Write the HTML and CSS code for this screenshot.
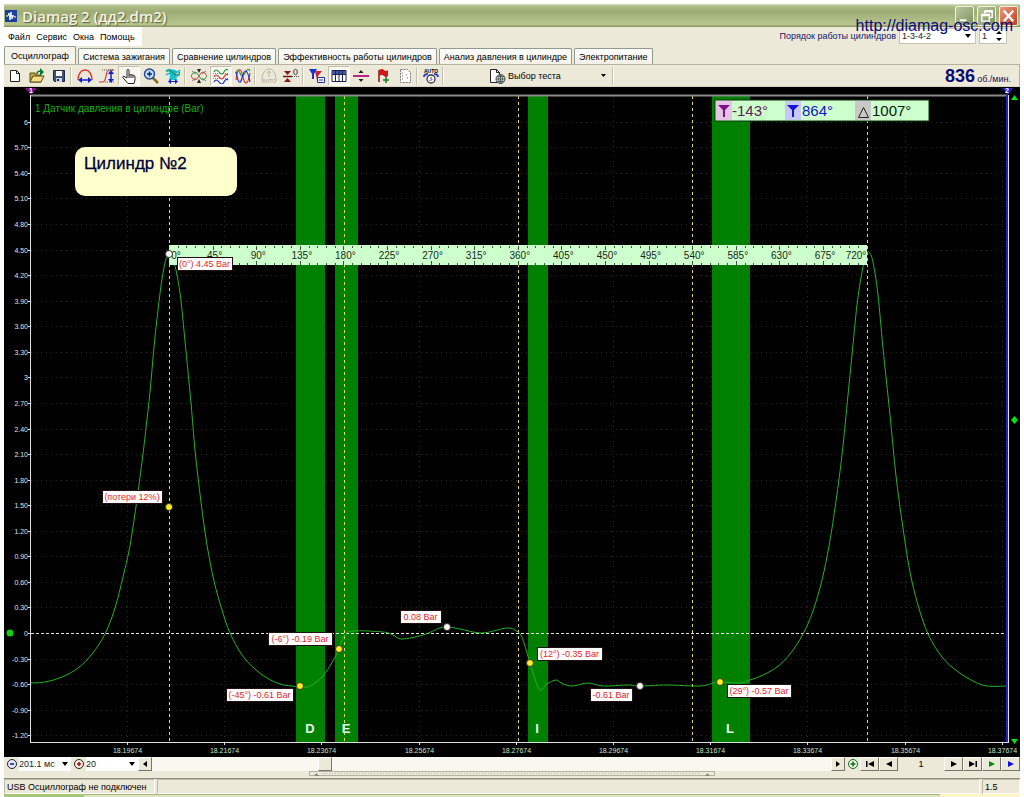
FILE: index.html
```html
<!DOCTYPE html>
<html lang="ru">
<head>
<meta charset="utf-8">
<title>Diamag 2 (дд2.dm2)</title>
<link rel="stylesheet" href="styles.css">
</head>
<body>
<div class="window">
  <a class="site-link" href="#site">http://diamag-osc.com</a>
  <header class="titlebar">
    <svg class="app-icon" viewBox="0 0 12 12" aria-hidden="true"><rect width="12" height="12" fill="#1a3f9c"/><path d="M1 6h2l1-3 1 7 1-8 1 7 1-4 1 2h2" fill="none" stroke="#fff"/></svg>
    <h1 class="title">Diamag 2 (дд2.dm2)</h1>
    <div class="caption-buttons">
      <button class="caption" aria-label="Свернуть"><svg viewBox="0 0 18 19"><path d="M4 14h7" stroke="#fff" stroke-width="2"/></svg></button>
      <button class="caption" aria-label="Восстановить"><svg viewBox="0 0 18 19"><path d="M7 4h8v7h-3M7 4v3M7 5h8M4 8h8v7H4zM4 9h8" fill="none" stroke="#fff" stroke-width="1.5"/></svg></button>
      <button class="caption close" aria-label="Закрыть"><svg viewBox="0 0 18 19"><path d="M4 4l10 11M14 4L4 15" stroke="#fff" stroke-width="2.4"/></svg></button>
    </div>
  </header>

  <div class="menu-row">
    <nav class="menu">
      <button>Файл</button><button>Сервис</button><button>Окна</button><button>Помощь</button>
    </nav>
    <div class="order">
      <label for="order">Порядок работы цилиндров</label>
      <span class="combo order-combo"><select id="order"><option>1-3-4-2</option></select><svg class="drop" viewBox="0 0 6 4"><path d="M0 0h6L3 4z"/></svg></span>
      <span class="combo spin-combo"><input id="cyl" aria-label="Цилиндр" value="1"><svg class="spin" viewBox="0 0 6 12"><path d="M0 4h6L3 1zM0 8h6l-3 3z"/></svg></span>
    </div>
  </div>

  <div class="tabs" role="tablist">
    <button role="tab" aria-selected="true" class="tab active">Осциллограф</button>
    <button role="tab" class="tab">Система зажигания</button>
    <button role="tab" class="tab">Сравнение цилиндров</button>
    <button role="tab" class="tab">Эффективность работы цилиндров</button>
    <button role="tab" class="tab">Анализ давления в цилиндре</button>
    <button role="tab" class="tab">Электропитание</button>
  </div>

  <div class="toolbar">
    <button class="tool" aria-label="Новый"><svg viewBox="0 0 16 16"><path d="M3.500 2.500h6l3 3v8h-9z" fill="#fff" stroke="#222"/><path d="M9.500 2.500v3h3" fill="none" stroke="#222"/></svg></button>
    <button class="tool" aria-label="Открыть"><svg viewBox="0 0 16 16"><path d="M1 14V5h5l1 2h5v7z" fill="#c9a94a" stroke="#5b4a10"/><path d="M1 14l3-6h11l-3 6z" fill="#f3dc85" stroke="#5b4a10"/><path d="M11 0l4 4-4 4z" fill="#087a2a"/><path d="M8 6q0-3 4-3" fill="none" stroke="#087a2a" stroke-width="1.500"/></svg></button>
    <button class="tool" aria-label="Сохранить"><svg viewBox="0 0 16 16"><path d="M2.500 2.500h11v11h-10l-1-1z" fill="#40507c" stroke="#1d2748"/><path d="M5 3h6v5H5z" fill="#fff"/><path d="M5 10h6v4H5z" fill="#cdd3e2"/><path d="M6 11h2v2H6z" fill="#1d2748"/></svg></button>
    <i class="sep"></i>
    <button class="tool" aria-label="Ширина"><svg viewBox="0 0 16 16"><path d="M1 12C1 6 4 2 8 2s7 4 7 10" fill="none" stroke="#e03030" stroke-width="1.300"/><path d="M3 12h10" stroke="#1020d0" stroke-width="1.500"/><path d="M5 9v6l-4-3zM11 9v6l4-3z" fill="#1020d0"/></svg></button>
    <button class="tool" aria-label="Высота"><svg viewBox="0 0 16 16"><path d="M0 14h4C8 13 6 3 10 2h5" fill="none" stroke="#e03030" stroke-width="1.200"/><path d="M3 2h12M6 14h9" stroke="#555" stroke-dasharray="1 1"/><path d="M12 4v9" stroke="#1020d0" stroke-width="1.500"/><path d="M9 6l3-4 3 4zM9 11l3 4 3-4z" fill="#1020d0"/></svg></button>
    <button class="tool pressed" aria-label="Рука"><svg viewBox="0 0 16 16"><path d="M6 10V2.500q0-1 1-1t1 1V7q2-1 2 0 2-1 2 .8 2-.8 2 1V12l-1 3.500H7L3 11q-2-2-1-2.500 1-.5 2 .5z" fill="#fff" stroke="#222"/><path d="M8 7v3M10 7v3M12 8v2" stroke="#222"/></svg></button>
    <button class="tool" aria-label="Масштаб"><svg viewBox="0 0 16 16"><path d="M9 9l6 6" stroke="#8a6a20" stroke-width="2.500"/><circle cx="6.500" cy="6" r="5" fill="#bfe2ff" stroke="#26428c" stroke-width="1.400"/><path d="M4 6h5M6.500 3.500v5" stroke="#102080" stroke-width="1.500"/></svg></button>
    <button class="tool" aria-label="Сигнал"><svg viewBox="0 0 16 16"><path d="M4 3q4-3 8 0l-1 4 1 5H4l1-5z" fill="#19c5d5"/><path d="M1 3q3-3 7 0t7-1M1 7q3-3 7 0t7-1" fill="none" stroke="#11b8c8" stroke-width="1.400"/><path d="M1 4q3-3 7 1t7-1" fill="none" stroke="#16803c"/><path d="M4 13.500h8" stroke="#1020d0"/><path d="M6 11v5l-3-2.500zM10 11v5l3-2.500z" fill="#1020d0"/></svg></button>
    <i class="sep"></i>
    <button class="tool" aria-label="Сжать"><svg viewBox="0 0 16 16"><path d="M0 8q4-8 8 0t8 0" fill="none" stroke="#2b9a40"/><path d="M0 8q4 8 8 0t8 0" fill="none" stroke="#d04040"/><path d="M1 3l4 3M15 3l-4 3M1 13l4-3M15 13l-4-3" stroke="#666" stroke-width=".8"/><path d="M6 1h4L8 5zM6 15h4l-2-4z" fill="#222"/></svg></button>
    <button class="tool pressed" aria-label="Раздельно"><svg viewBox="0 0 16 16" fill="none" stroke-width="1.200"><path d="M1 4q2-4 5 0t5 0 4-2" stroke="#2b9a40"/><path d="M1 9q2-4 5 0t5 0 4-2" stroke="#e03030"/><path d="M1 14q2-4 5 0t5 0 4-2" stroke="#2030d0"/><path d="M0 5.500h16M0 10.500h16" stroke="#888" stroke-dasharray="1 1"/></svg></button>
    <button class="tool" aria-label="Вместе"><svg viewBox="0 0 16 16" fill="none" stroke-width="1.200"><path d="M1 5q2-6 4 0t5 0 5-2" stroke="#2b9a40"/><path d="M1 12C3-3 6 0 8 9s5 8 7-4" stroke="#e03030"/><path d="M1 4c2 10 4 14 6 6s5-12 8 4" stroke="#2030d0"/></svg></button>
    <i class="sep"></i>
    <button class="tool" aria-label="Авто" disabled><svg viewBox="0 0 16 16"><path d="M1 13C1 5 4 1 8 1s7 4 7 12M8 3v6M6 5l2-2 2 2" fill="none" stroke="#b9b5a3"/><text x="8" y="15" text-anchor="middle" class="icon-text muted">AUTO</text></svg></button>
    <button class="tool" aria-label="Ноль"><svg viewBox="0 0 16 16"><path d="M0 8.500h9" stroke="#7a1010" stroke-width="1.500"/><path d="M1 3h7L4.500 7zM1 14h7l-3.500-4z" fill="#8a1515"/><path d="M9 8.500h7" stroke="#555" stroke-dasharray="1 1"/><ellipse cx="12.500" cy="4" rx="1.800" ry="2.700" fill="none" stroke="#444"/></svg></button>
    <i class="sep"></i>
    <button class="tool" aria-label="Маркеры"><svg viewBox="0 0 16 16"><path d="M0 1h8L5 6v5H3V6z" fill="#2030d0"/><path d="M6 3h7L9 8v4H8z" fill="#c52040"/><path d="M8.500 9.500h7v5h-7z" fill="#fff" stroke="#2030a0"/><path d="M10 12h4" stroke="#2030a0"/></svg></button>
    <button class="tool pressed" aria-label="Таблица"><svg viewBox="0 0 16 16"><path d="M1 2.500h14v11H1z" fill="#fff" stroke="#1a2450"/><path d="M1 3h14v3H1z" fill="#4459a8"/><path d="M4.500 3v10M8 3v10M11.500 3v10M1 6.500h14" stroke="#1a2450"/></svg></button>
    <button class="tool" aria-label="Уровень"><svg viewBox="0 0 16 16"><path d="M0 8h16" stroke="#b01080" stroke-width="1.800"/><path d="M5.500 5L8 2l2.500 3zM5.500 11L8 14l2.500-3z" fill="#222"/></svg></button>
    <button class="tool" aria-label="Флаг"><svg viewBox="0 0 16 16"><path d="M4 2v12" stroke="#801010" stroke-width="1.500"/><path d="M4 2q3-2 5 0t4 0v6q-2 2-4 0T4 8z" fill="#d01818"/><path d="M8 12h6M11 9v6" stroke="#148020" stroke-width="1.600"/></svg></button>
    <button class="tool" aria-label="Заметки"><svg viewBox="0 0 16 16"><path d="M3.500 1.500h7l3 3v10h-10z" fill="#fff" stroke="#777" stroke-dasharray="2 1"/><path d="M5 5h1M5 8h1M5 11h1M9 7h1M10 10h1" stroke="#777"/></svg></button>
    <i class="sep"></i>
    <button class="tool" aria-label="Автотест"><svg viewBox="0 0 16 16"><path d="M1 9q0-3 4-3M15 9q0-3-4-3" fill="none" stroke="#3048c8" stroke-width="2"/><circle cx="8" cy="11" r="4" fill="#fff" stroke="#334" stroke-width="1.300"/><path d="M8 9v2M6.500 12.500l3-1" stroke="#3048c8"/><text x="8" y="5" text-anchor="middle" class="icon-text">AUTO</text></svg></button>
    <i class="sep"></i>
    <button class="test-select">
      <svg class="test-icon" viewBox="0 0 18 16"><path d="M2.500 1.500h6l3 3v10h-9z" fill="#fff" stroke="#222"/><path d="M8.500 1.500v3h3" fill="none" stroke="#222"/><circle cx="12.500" cy="11" r="4.500" fill="#ccd5cc" stroke="#444"/><path d="M8 11h9M12.500 6.500v9M9 8.500h7M9 13.500h7M12.500 6.500q-4 4.500 0 9M12.500 6.500q4 4.500 0 9" fill="none" stroke="#455" stroke-width=".8"/></svg>
      <span class="test-label">Выбор теста</span>
      <svg class="drop" viewBox="0 0 6 4"><path d="M1 0h5L3.500 3z"/></svg>
    </button>
    <i class="sep"></i>
    <div class="rpm"><strong>836</strong><span>об./мин.</span></div>
  </div>

  <main class="scope">
    <svg id="chart" class="chart" viewBox="4 87 1016 670" role="img" aria-label="Датчик давления в цилиндре"></svg>
  </main>

  <div class="controls">
    <button class="round" aria-label="Уменьшить"><svg viewBox="0 0 12 12"><circle cx="6" cy="6" r="4.500" fill="#e4e8ff" stroke="#222"/><path d="M4 6h4" stroke="#1a1a80" stroke-width="1.500"/></svg></button>
    <span class="combo time-combo"><select aria-label="Развёртка"><option>201.1 мс</option></select><svg class="drop" viewBox="0 0 6 4"><path d="M0 0h6L3 4z"/></svg></span>
    <button class="round" aria-label="Увеличить"><svg viewBox="0 0 12 12"><circle cx="6" cy="6" r="4.500" fill="#ffe9e4" stroke="#222"/><path d="M4 6h4M6 4v4" stroke="#a01010" stroke-width="1.500"/></svg></button>
    <span class="combo time-combo"><select aria-label="Масштаб"><option>20</option></select><svg class="drop" viewBox="0 0 6 4"><path d="M0 0h6L3 4z"/></svg></span>
    <button class="nav" aria-label="Влево"><svg viewBox="0 0 10 10"><path d="M7 2v6L3 5z"/></svg></button>
    <input class="scroll" type="range" min="0" max="100" value="25" aria-label="Прокрутка">
    <button class="nav" aria-label="Вправо"><svg viewBox="0 0 10 10"><path d="M3 2v6l4-3z"/></svg></button>
    <button class="round" aria-label="Добавить"><svg viewBox="0 0 12 12"><circle cx="6" cy="6" r="4.500" fill="#e8fbe8" stroke="#176a17"/><path d="M3.500 6h5M6 3.500v5" stroke="#176a17" stroke-width="1.500"/></svg></button>
    <button class="nav wide" aria-label="Первый"><svg viewBox="0 0 10 10"><path d="M1 2h1.500v6H1zM9 2v6L3 5z"/></svg></button>
    <button class="nav wide" aria-label="Предыдущий"><svg viewBox="0 0 10 10"><path d="M8 2v6L2 5z"/></svg></button>
    <output class="frame">1</output>
    <button class="nav wide" aria-label="Следующий"><svg viewBox="0 0 10 10"><path d="M2 2v6l6-3z"/></svg></button>
    <button class="nav wide" aria-label="Последний"><svg viewBox="0 0 10 10"><path d="M7.500 2H9v6H7.500zM1 2v6l6-3z"/></svg></button>
    <button class="nav wide go" aria-label="Пуск"><svg viewBox="0 0 10 10"><path d="M2 2v6l6-3z"/></svg></button>
    <button class="nav wide run" aria-label="Воспроизвести"><svg viewBox="0 0 10 10"><path d="M2 2v6l6-3z"/></svg></button>
  </div>
  <div class="splitter"><div class="grip"><svg viewBox="0 0 5 4"><path d="M0 4l2.500-3L5 4z"/></svg><i></i><svg viewBox="0 0 5 4"><path d="M0 4l2.500-3L5 4z"/></svg></div></div>
  <footer class="status"><span class="cell device">USB Осциллограф не подключен</span><span class="cell fill"></span><span class="cell version">1.5</span></footer>
  <div class="desk"><i class="desk-left"></i><i class="desk-mid"></i><i class="desk-right"></i></div>
</div>
<script src="chart.js"></script>
</body>
</html>
```
FILE: styles.css
```css
* { box-sizing: border-box; }
body {
  margin: 0;
  background: #fff;
  font-family: "Liberation Sans", Arial, sans-serif;
  font-size: 9px;
  color: #000;
}
button, input, select {
  font: inherit;
  color: inherit;
  border: 0;
  padding: 0;
  margin: 0;
  background: none;
  border-radius: 0;
  appearance: none;
}
svg { display: block; }
.window {
  position: relative;
  display: flex;
  flex-direction: column;
  min-height: 100vh;
  padding: 4px 4px 0;
}
.site-link {
  position: absolute;
  top: 17px;
  right: 11px;
  z-index: 2;
  font-size: 16px;
  line-height: 18px;
  color: #0a0a78;
  text-decoration: none;
}

.titlebar {
  display: flex;
  align-items: center;
  gap: 5px;
  height: 23px;
  padding: 0 2px 0 1px;
  background: linear-gradient(#dbe3c4 0, #b0be88 2px, #9dac74 8px, #b4c48c 19px, #b4c48c 21px, #8c9866 22px);
}
.app-icon { width: 12px; height: 12px; }
.title {
  flex: 1;
  margin: 0;
  font: 600 15px/20px "Open Sans", "Noto Sans", sans-serif;
  color: #f6f3e4;
  text-shadow: 1px 1px 1px #55603a;
}
.caption-buttons { display: flex; gap: 3px; }
.caption {
  width: 19px;
  height: 20px;
  border: 1px solid #eef2df;
  border-radius: 2px;
  background: linear-gradient(135deg, #b9c79c, #7f9160);
}
.caption.close { background: linear-gradient(135deg, #e99a80, #c43c20); }

.menu-row {
  display: flex;
  justify-content: space-between;
  height: 19px;
  background: #ece9d8;
}
.menu {
  display: flex;
  gap: 6px;
  padding: 0 7px 0 4px;
  background: #fff;
}
.order {
  display: flex;
  align-items: flex-start;
  gap: 3px;
  padding: 1px 13px 0 0;
  color: #14146e;
}
.order label { line-height: 17px; }
.combo {
  display: flex;
  align-items: center;
  background: #fff;
  color: #222;
}
.combo select, .combo input { flex: 1; min-width: 0; height: 100%; }
.combo .drop { pointer-events: none; }
.order .combo { height: 16px; border: 1px solid #c5c2b0; padding: 0 4px 0 2px; }
.order-combo { width: 77px; }
.spin-combo { width: 28px; }
.drop { width: 6px; height: 4px; }
.spin { width: 6px; height: 12px; }

.tabs {
  display: flex;
  align-items: flex-end;
  gap: 2px;
  height: 18px;
  background: #ece9d8;
}
.tab {
  height: 16px;
  padding: 0 4px;
  border: 1px solid #919b8c;
  border-width: 1px 1px 0;
  border-radius: 2px 2px 0 0;
  background: linear-gradient(#fff, #f3f1e6);
}
.tab.active {
  height: 18px;
  padding: 0 6px;
  background: #f6f4ea;
}

.toolbar {
  display: flex;
  align-items: center;
  height: 23px;
  border: 1px solid #b5b2a0;
  border-width: 1px 1px 1px 0;
  border-bottom-color: #d8d5c5;
  background: #ece9d8;
}
.tool {
  display: grid;
  place-items: center;
  width: 22px;
  height: 20px;
}
.tool svg { width: 16px; height: 16px; }
.tool.pressed { background: #f8f7f0; border: 1px solid #c3c0ae; border-right-color: #fff; border-bottom-color: #fff; }
.sep {
  width: 4px;
  height: 18px;
  border-left: 1px solid #c2bfad;
  box-shadow: inset 1px 0 #fff;
}
.icon-text { font: bold 5px "Liberation Sans", sans-serif; }
.muted { fill: #b9b5a3; }
.test-select {
  display: flex;
  align-items: center;
  gap: 2px;
  width: 166px;
  height: 20px;
  padding: 0 6px 0 42px;
}
.test-icon { width: 18px; height: 16px; }
.test-label { flex: 1; text-align: left; }
.rpm {
  display: flex;
  align-items: baseline;
  gap: 2px;
  margin-left: auto;
  padding-right: 8px;
  color: #14144e;
}
.rpm strong { font-size: 18px; line-height: 20px; color: #0a0a70; }

.scope { background: #000; }
.chart { width: 100%; height: auto; font-family: "Liberation Sans", Arial, sans-serif; }
.grid { stroke: #2a2a2a; stroke-dasharray: 1 4; }
.band { fill: #008000; }
.band-name { fill: #e8ffe8; font-size: 13px; font-weight: bold; }
.phase { stroke: #e6d860; stroke-dasharray: 3 3; }
.zero { stroke: #e8e8e8; stroke-dasharray: 3 2; }
.axis { stroke: #e0e0e0; }
.axis-top { stroke: #8a8a8a; stroke-width: 2; }
.scale { fill: #e0e0e0; font-size: 7px; }
.time { fill: #c4e2c8; font-size: 7px; }
.channel { fill: #10b010; font-size: 10px; }
.wave { fill: none; stroke: #24b424; }
.ruler { fill: #ccffcc; }
.ruler-tick { stroke: #405040; }
.degree { fill: #182818; font-size: 10px; }
.dot { stroke: #333; stroke-width: 1; }
.dot.yellow { fill: #ffee20; }
.dot.white { fill: #fff; }
.callout { fill: #fff; stroke: #201010; }
.callout-text { fill: #e81c28; font-size: 9px; }
.note { fill: #ffffcc; }
.note-text { fill: #00003c; font-size: 17px; stroke: #00003c; stroke-width: .3; }
.readout-text { font-size: 15px; }
.flag-text { fill: #fff; font-size: 7px; font-weight: bold; }

.controls {
  display: flex;
  height: 14px;
  background: #ece9d8;
}
.round { width: 15px; display: grid; place-items: center; background: #ece9d8; }
.round svg { width: 12px; height: 12px; }
.time-combo { width: 52px; padding-right: 3px; }
.nav {
  display: grid;
  place-items: center;
  width: 14px;
  border: 1px solid #fff;
  border-right-color: #77756a;
  border-bottom-color: #77756a;
  background: #ece9d8;
}
.nav.wide { width: 19px; }
.nav svg { width: 10px; height: 10px; }
.go { fill: #0a8a0a; }
.run { fill: #1010e0; }
.scroll { flex: 1; min-width: 0; background: #f8f7f0; }
.scroll::-webkit-slider-thumb {
  appearance: none;
  width: 14px;
  height: 14px;
  border: 1px solid #fff;
  border-right-color: #77756a;
  border-bottom-color: #77756a;
  background: #ece9d8;
}
.frame { width: 46px; text-align: center; line-height: 14px; }
.splitter {
  display: flex;
  justify-content: center;
  height: 8px;
  border-bottom: 1px solid #8f8c80;
  background: #ece9d8;
}
.grip {
  display: flex;
  align-items: center;
  gap: 4px;
  width: 40%;
  height: 5px;
  padding: 0 4px;
  border: 1px solid #b5b2a0;
}
.grip svg { width: 5px; height: 4px; fill: #888; }
.grip i { flex: 1; height: 1px; background: repeating-linear-gradient(90deg, #b5b2a0 0 1px, transparent 1px 3px); }
.status {
  display: flex;
  gap: 2px;
  height: 15px;
  background: #ece9d8;
}
.cell { border: 1px solid #bcb9a8; border-right-color: #fff; border-bottom-color: #fff; padding: 0 2px; line-height: 14px; }
.device { width: 151px; white-space: nowrap; }
.fill { flex: 1; }
.version { width: 38px; }
.desk { display: flex; height: 3px; }
.desk-left { width: 80px; background: #a5c878; }
.desk-mid { flex: 1; background: #dce6b8; border-top: 1px solid #a8b488; }
.desk-right { width: 80px; background: #fdf6c4; }
```
FILE: chart.js
```js
const NS = 'http://www.w3.org/2000/svg';
const chart = document.getElementById('chart');

function add(tag, attrs, text) {
  const el = document.createElementNS(NS, tag);
  for (const key in attrs) el.setAttribute(key, attrs[key]);
  if (text !== undefined) el.textContent = text;
  chart.appendChild(el);
  return el;
}
const line = (x1, y1, x2, y2, cls) => add('line', { x1, y1, x2, y2, class: cls });

const LEFT = 31, RIGHT = 1007, TOP = 96, BOTTOM = 742;
const yOf = bar => 633 - bar * 85.2;

// Grid and scales
for (let i = -4; i <= 20; i++) {
  const y = Math.round(yOf(i * 0.3)) + 0.5;
  if (i !== 0) line(LEFT, y, RIGHT, y, 'grid');
  line(28, y, 31, y, 'axis');
  const value = i * 0.3;
  const label = i % 10 === 0 ? String(Math.round(value)) : value.toFixed(2);
  add('text', { x: 28, y: y + 2, 'text-anchor': 'end', class: 'scale' }, label);
}
for (let k = 0; k < 10; k++) {
  const x = Math.round(127 + k * 97.2) + 0.5;
  line(x, TOP, x, BOTTOM, 'grid');
  line(x, BOTTOM, x, BOTTOM + 3, 'axis');
  add('text', { x, y: 753, 'text-anchor': 'middle', class: 'time' }, (18.19674 + k * 0.02).toFixed(5));
}

// Phase bands
[[296, 29], [335, 23], [528, 20], [712, 38]].forEach(([x, w]) =>
  add('rect', { x, y: TOP, width: w, height: BOTTOM - TOP, class: 'band' }));
line(LEFT, 633.5, RIGHT, 633.5, 'zero');
[169.5, 344.5, 518.5, 692.5, 867.5].forEach(x => line(x, TOP, x, BOTTOM, 'phase'));
[['D', 310], ['E', 346], ['I', 537], ['L', 730]].forEach(([name, x]) =>
  add('text', { x, y: 733, 'text-anchor': 'middle', class: 'band-name' }, name));

// Pressure curve
const P = [[31,683],[45,682],[62,677],[78,668],[92,654],[105,634],[115,608],[123,577],[129,551],[133,527],[138,492],[143,454],[146,428],[150,392],[154,347],[158,310],[162,279],[166,259],[169,254],[172,256],[177,275],[181,301],[185,341],[191,403],[195,450],[201,502],[207,545],[214,581],[222,610],[230,633],[242,655],[255,669],[267,678],[280,684],[292,686],[307,687],[320,679],[330,666],[339,649],[344,636],[353,631],[383,632],[393,635],[402,639],[423,635],[440,628],[448,627],[460,629],[482,633],[507,628],[518,632],[523,640],[530,663],[537,685],[541,690],[547,684],[556,680],[563,684],[573,686],[588,683],[603,686],[627,685],[640,686],[667,685],[700,686],[713,683],[720,682],[740,683],[750,680],[763,675],[777,667],[790,654],[803,634],[813,611],[822,580],[829,546],[835,508],[842,455],[848,395],[852,355],[857,305],[862,272],[866,255],[869,252],[873,262],[878,295],[883,348],[890,415],[896,476],[903,528],[910,572],[918,605],[928,634],[942,657],[957,671],[973,681],[987,686],[1007,686]];
let d = 'M' + P[0];
for (let i = 0; i < P.length - 1; i++) {
  const a = P[Math.max(i - 1, 0)], b = P[i], c = P[i + 1], e = P[Math.min(i + 2, P.length - 1)];
  d += `C${b[0] + (c[0] - a[0]) / 6} ${b[1] + (c[1] - a[1]) / 6} ${c[0] - (e[0] - b[0]) / 6} ${c[1] - (e[1] - b[1]) / 6} ${c[0]} ${c[1]}`;
}
add('path', { d, class: 'wave' });

// Crank angle ruler
add('rect', { x: 169, y: 245, width: 698, height: 20, class: 'ruler' });
for (let i = 1; i < 80; i++) {
  const x = Math.round(169 + i * 8.72) + 0.5;
  const len = i % 5 === 0 ? 4 : 2;
  line(x, 246, x, 246 + len, 'ruler-tick');
  line(x, 265, x, 265 - len, 'ruler-tick');
}
for (let i = 0; i <= 16; i++) {
  const x = i === 0 ? 176 : i === 16 ? 856 : 171 + i * 43.6;
  add('text', { x, y: 259, 'text-anchor': 'middle', class: 'degree' }, i * 45 + '°');
}
line(169.5, 245, 169.5, 265, 'phase');

// Frame and edge markers
line(LEFT, 95.5, 1008, 95.5, 'axis-top');
line(30.5, 95, 30.5, 743, 'axis');
line(LEFT, 742.5, 1008, 742.5, 'axis');
line(1008.5, 95, 1008.5, 743, 'axis');
add('rect', { x: 1006, y: 95, width: 2, height: 647, fill: '#2020c0' });
add('path', { d: 'M25 88h12l-6 7z', fill: '#80108a' });
add('text', { x: 31, y: 93, 'text-anchor': 'middle', class: 'flag-text' }, '1');
add('path', { d: 'M1002 88h11l-5 7z', fill: '#2020d0' });
add('text', { x: 1007, y: 93, 'text-anchor': 'middle', class: 'flag-text' }, '2');
add('path', { d: 'M1011 100h7l-3.500-5zM1011 739h7l-3.500 5zM1014.500 416l3.500 4-3.500 4-3.500-4z', fill: '#10e010' });
add('circle', { cx: 10, cy: 633, r: 3.5, fill: '#10d010' });

// Value callouts: x, y, width, text, marker x, marker y, marker colour
[[177, 257, 55, '(0°) 4.45 Bar', 169, 254, 'white'],
 [102, 490, 60, '(потери 12%)', 169, 507, 'yellow'],
 [226, 688, 67, '(-45°) -0.61 Bar', 300, 686, 'yellow'],
 [268, 632, 64, '(-6°) -0.19 Bar', 339, 649, 'yellow'],
 [400, 610, 41, '0.08 Bar', 447, 627, 'white'],
 [537, 647, 65, '(12°) -0.35 Bar', 530, 663, 'yellow'],
 [590, 688, 42, '-0.61 Bar', 640, 686, 'white'],
 [727, 684, 64, '(29°) -0.57 Bar', 720, 682, 'yellow']
].forEach(([x, y, w, text, mx, my, colour]) => {
  add('circle', { cx: mx, cy: my, r: 3.5, class: 'dot ' + colour });
  add('rect', { x: x + 0.5, y: y + 0.5, width: w, height: 13, class: 'callout' });
  add('text', { x: x + w / 2, y: y + 10, 'text-anchor': 'middle', class: 'callout-text' }, text);
});

// Channel title, note and cursor readout
add('text', { x: 35, y: 112, class: 'channel' }, '1 Датчик давления в цилиндре (Bar)');
add('rect', { x: 75, y: 147, width: 162, height: 49, rx: 10, class: 'note' });
add('text', { x: 84, y: 169, class: 'note-text' }, 'Цилиндр №2');
add('rect', { x: 715, y: 100, width: 214, height: 21, class: 'ruler', stroke: '#103010' });
[[716, '#e4c4e4'], [785, '#c8c8f4'], [855, '#c8c8c8']].forEach(([x, fill]) => add('rect', { x, y: 101, width: 16, height: 19, fill }));
add('path', { d: 'M718 105h12l-5 5v7h-2v-7z', fill: '#80108a' });
add('path', { d: 'M787 105h12l-5 5v7h-2v-7z', fill: '#1414d8' });
add('path', { d: 'M858.500 117.500h10l-5-10z', fill: 'none', stroke: '#222' });
add('text', { x: 732, y: 116, class: 'readout-text', fill: '#60205c' }, '-143°');
add('text', { x: 802, y: 116, class: 'readout-text', fill: '#1414c8' }, '864°');
add('text', { x: 872, y: 116, class: 'readout-text', fill: '#082008' }, '1007°');
```
